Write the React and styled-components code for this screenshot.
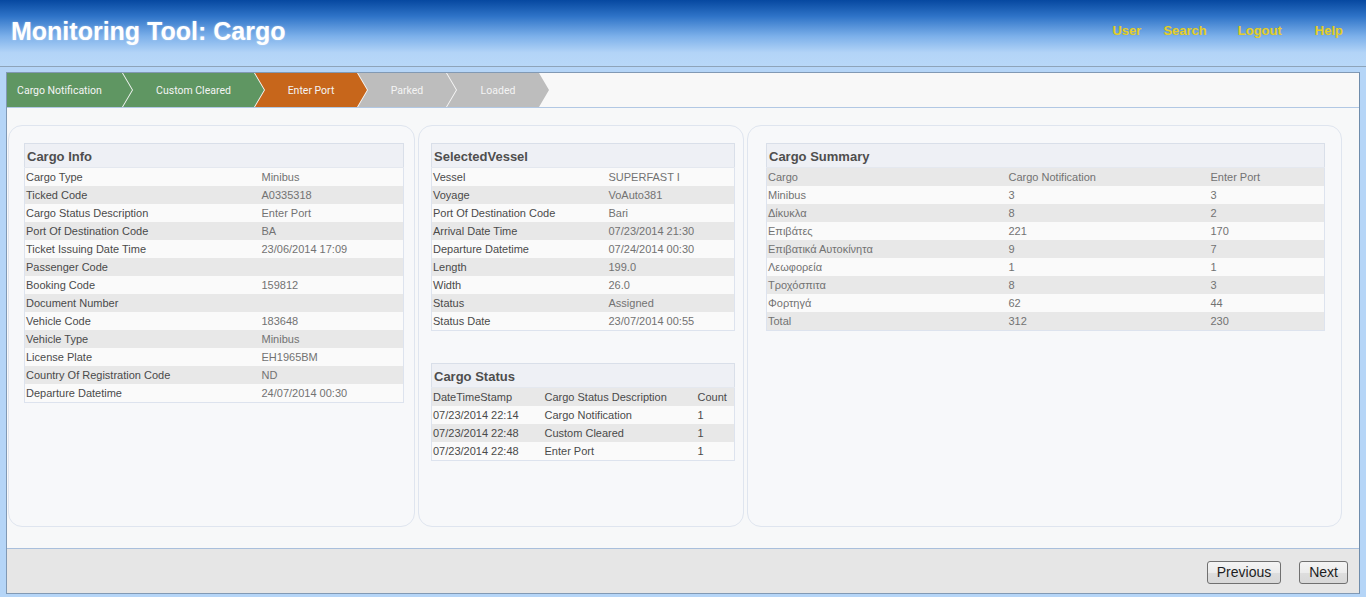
import React from 'react';
import styled, { createGlobalStyle } from 'styled-components';

const GlobalStyle = createGlobalStyle`
  html, body {
    margin: 0;
    padding: 0;
    background: #b5d5f7;
  }
  body {
    font-family: "Liberation Sans", Arial, sans-serif;
    height: 597px;
    overflow: hidden;
  }
`;

const Header = styled.header`
  height: 66px;
  border-bottom: 1px solid #8ea4b9;
  background: linear-gradient(to bottom, #0648a0 0%, #2f74c8 25%, #7cb0ea 55%, #b3d4f7 80%, #b8d8f8 100%);
  display: flex;
  align-items: center;
  justify-content: space-between;
  padding: 0 23px 0 11px;
`;

const Title = styled.h1`
  margin: 0;
  font-family: "Liberation Sans", Arial, sans-serif;
  font-size: 25px;
  font-weight: bold;
  color: #ffffff;
  text-shadow: 0 0 2px rgba(255, 255, 255, 0.4);
  margin-top: -3px;
`;

const Nav = styled.nav`
  display: flex;
  align-items: center;
  margin-top: -6px;
`;

const NavLink = styled.a`
  font-size: 13px;
  font-weight: bold;
  color: #e4cf2a;
  text-decoration: none;
  margin-left: ${(props) => props.space || 0}px;
  text-shadow: 0 0 1px rgba(140, 120, 0, 0.35);
`;

const Shell = styled.div`
  margin: 5px 6px 0 6px;
  border: 1px solid #8199b4;
  border-right-color: #6f8cab;
  background: #f7f8f9;
`;

const Steps = styled.div`
  display: flex;
  height: 34px;
  border-bottom: 1px solid #b2c8e4;
  background: #f8f8f8;
`;

const stepColors = {
  done: '#5f9662',
  current: '#c7661b',
  todo: '#bdbdbd',
};

const Step = styled.div`
  width: ${(props) => props.w}px;
  margin-left: ${(props) => (props.first ? 0 : -9)}px;
  padding-left: ${(props) => (props.first ? 0 : 10)}px;
  padding-right: ${(props) => (props.first ? 20 : 10)}px;
  padding-top: 1px;
  box-sizing: border-box;
  background: ${(props) => stepColors[props.state]};
  clip-path: ${(props) =>
    props.first
      ? 'polygon(0 0, calc(100% - 10px) 0, 100% 50%, calc(100% - 10px) 100%, 0 100%)'
      : 'polygon(0 0, calc(100% - 10px) 0, 100% 50%, calc(100% - 10px) 100%, 0 100%, 10px 50%)'};
  display: flex;
  align-items: center;
  justify-content: center;
  font-family: Roboto, "Liberation Sans", sans-serif;
  font-size: 10.5px;
  color: #f4f4f4;
`;

const Body = styled.div`
  height: 440px;
  box-sizing: border-box;
  padding: 17px 0 21px 1px;
  display: grid;
  grid-template-columns: 407px 326px 595px;
  column-gap: 3px;
`;

const Panel = styled.div`
  border: 1px solid #dfe5ef;
  border-radius: 14px;
  background: #f7f8fa;
  padding: 17px ${(props) => props.right}px 0 ${(props) => props.left}px;
  display: flex;
  flex-direction: column;
  gap: 32px;
`;

const Table = styled.table`
  width: 100%;
  border-collapse: collapse;
  border: 1px solid #dde3ee;
  font-size: 11px;
  table-layout: fixed;
`;

const Caption = styled.th`
  height: 21px;
  padding: 2px 2px 0;
  text-align: left;
  font-size: 13px;
  font-weight: bold;
  color: #4e4e4e;
  background: #eef0f5;
  border: 1px solid #d9dfe9;
  border-bottom-color: #e4e8ef;
`;

const Row = styled.tr`
  height: 18px;
  background: ${(props) => (props.shade ? '#e8e8e8' : '#fafafa')};
`;

const Cell = styled.td`
  padding: 1px 1px 0;
  line-height: 17px;
  white-space: nowrap;
  overflow: hidden;
  color: ${(props) => (props.muted ? '#727272' : '#4a4a4a')};
`;

const Footer = styled.div`
  height: 44px;
  border-top: 1px solid #a9bfdc;
  background: #e6e6e6;
  display: flex;
  align-items: center;
  justify-content: flex-end;
  gap: 18px;
  padding-right: 11px;
`;

const Button = styled.button`
  height: 23px;
  padding: 0 ${(props) => props.pad}px;
  border: 1px solid #707070;
  border-radius: 3px;
  background: linear-gradient(to bottom, #f4f4f4 0%, #ececec 50%, #dedede 51%, #d8d8d8 100%);
  font-family: "Liberation Sans", Arial, sans-serif;
  font-size: 14px;
  color: #1e1e1e;
  margin-top: 2px;
`;

const steps = [
  { label: 'Cargo Notification', state: 'done', w: 125 },
  { label: 'Custom Cleared', state: 'done', w: 141 },
  { label: 'Enter Port', state: 'current', w: 112 },
  { label: 'Parked', state: 'todo', w: 98 },
  { label: 'Loaded', state: 'todo', w: 102 },
];

const cargoInfo = [
  ['Cargo Type', 'Minibus'],
  ['Ticked Code', 'A0335318'],
  ['Cargo Status Description', 'Enter Port'],
  ['Port Of Destination Code', 'BA'],
  ['Ticket Issuing Date Time', '23/06/2014 17:09'],
  ['Passenger Code', ''],
  ['Booking Code', '159812'],
  ['Document Number', ''],
  ['Vehicle Code', '183648'],
  ['Vehicle Type', 'Minibus'],
  ['License Plate', 'EH1965BM'],
  ['Country Of Registration Code', 'ND'],
  ['Departure Datetime', '24/07/2014 00:30'],
];

const vessel = [
  ['Vessel', 'SUPERFAST I'],
  ['Voyage', 'VoAuto381'],
  ['Port Of Destination Code', 'Bari'],
  ['Arrival Date Time', '07/23/2014 21:30'],
  ['Departure Datetime', '07/24/2014 00:30'],
  ['Length', '199.0'],
  ['Width', '26.0'],
  ['Status', 'Assigned'],
  ['Status Date', '23/07/2014 00:55'],
];

const statusRows = [
  ['07/23/2014 22:14', 'Cargo Notification', '1'],
  ['07/23/2014 22:48', 'Custom Cleared', '1'],
  ['07/23/2014 22:48', 'Enter Port', '1'],
];

const summary = [
  ['Minibus', '3', '3'],
  ['Δίκυκλα', '8', '2'],
  ['Επιβάτες', '221', '170'],
  ['Επιβατικά Αυτοκίνητα', '9', '7'],
  ['Λεωφορεία', '1', '1'],
  ['Τροχόσπιτα', '8', '3'],
  ['Φορτηγά', '62', '44'],
  ['Total', '312', '230'],
];

const KeyValueTable = ({ title, rows, keyWidth }) => (
  <Table>
    <colgroup>
      <col style={{ width: keyWidth }} />
      <col />
    </colgroup>
    <thead>
      <tr>
        <Caption colSpan={2}>{title}</Caption>
      </tr>
    </thead>
    <tbody>
      {rows.map((r, i) => (
        <Row key={r[0]} shade={i % 2 === 1}>
          <Cell>{r[0]}</Cell>
          <Cell muted>{r[1]}</Cell>
        </Row>
      ))}
    </tbody>
  </Table>
);

const GridTable = ({ title, columns, widths, rows, muted }) => (
  <Table>
    <colgroup>
      {widths.map((w, i) => (
        <col key={i} style={w ? { width: w } : undefined} />
      ))}
    </colgroup>
    <thead>
      <tr>
        <Caption colSpan={columns.length}>{title}</Caption>
      </tr>
      <Row shade>
        {columns.map((c) => (
          <Cell key={c} muted={muted}>{c}</Cell>
        ))}
      </Row>
    </thead>
    <tbody>
      {rows.map((r, i) => (
        <Row key={i} shade={i % 2 === 1}>
          {r.map((v, j) => (
            <Cell key={j} muted={muted}>{v}</Cell>
          ))}
        </Row>
      ))}
    </tbody>
  </Table>
);

const App = () => {
  return (
    <>
      <GlobalStyle />
      <Header>
        <Title>Monitoring Tool: Cargo</Title>
        <Nav>
          <NavLink href="#">User</NavLink>
          <NavLink href="#" space={22}>Search</NavLink>
          <NavLink href="#" space={31}>Logout</NavLink>
          <NavLink href="#" space={33}>Help</NavLink>
        </Nav>
      </Header>
      <Shell>
        <Steps>
          {steps.map((s, i) => (
            <Step key={s.label} first={i === 0} state={s.state} w={s.w}>
              {s.label}
            </Step>
          ))}
        </Steps>
        <Body>
          <Panel left={15} right={10}>
            <KeyValueTable title="Cargo Info" rows={cargoInfo} keyWidth="236px" />
          </Panel>
          <Panel left={12} right={8}>
            <KeyValueTable title="SelectedVessel" rows={vessel} keyWidth="176px" />
            <GridTable
              title="Cargo Status"
              columns={['DateTimeStamp', 'Cargo Status Description', 'Count']}
              widths={['112px', '153px', null]}
              rows={statusRows}
            />
          </Panel>
          <Panel left={18} right={16}>
            <GridTable
              title="Cargo Summary"
              columns={['Cargo', 'Cargo Notification', 'Enter Port']}
              widths={['241px', '202px', null]}
              rows={summary}
              muted
            />
          </Panel>
        </Body>
        <Footer>
          <Button pad={9}>Previous</Button>
          <Button pad={9}>Next</Button>
        </Footer>
      </Shell>
    </>
  );
};

export default App;
